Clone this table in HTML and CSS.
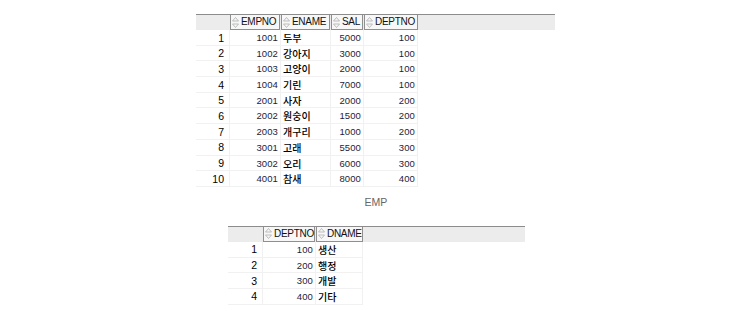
FILE: index.html
```html
<!DOCTYPE html>
<html lang="ko">
<head>
<meta charset="utf-8">
<link rel="stylesheet" href="styles.css">
</head>
<body>
<div class="page">
  <div class="grid emp">
    <div class="head">
      <div class="hc rn"></div>
      <div class="hc c-empno"><svg class="sort" viewBox="0 0 7 11"><path d="M3.5 0.5 L6.5 4 L0.5 4 Z M0.5 7 L6.5 7 L3.5 10.5 Z"/></svg><span class="lbl">EMPNO</span></div>
      <div class="hc c-ename"><svg class="sort" viewBox="0 0 7 11"><path d="M3.5 0.5 L6.5 4 L0.5 4 Z M0.5 7 L6.5 7 L3.5 10.5 Z"/></svg><span class="lbl">ENAME</span></div>
      <div class="hc c-sal"><svg class="sort" viewBox="0 0 7 11"><path d="M3.5 0.5 L6.5 4 L0.5 4 Z M0.5 7 L6.5 7 L3.5 10.5 Z"/></svg><span class="lbl">SAL</span></div>
      <div class="hc c-deptno"><svg class="sort" viewBox="0 0 7 11"><path d="M3.5 0.5 L6.5 4 L0.5 4 Z M0.5 7 L6.5 7 L3.5 10.5 Z"/></svg><span class="lbl">DEPTNO</span></div>
    </div>
    <div class="body">
      <div class="row"><span class="n">1</span><span class="num">1001</span><span class="ko">두부</span><span class="num">5000</span><span class="num">100</span></div>
      <div class="row"><span class="n">2</span><span class="num">1002</span><span class="ko">강아지</span><span class="num">3000</span><span class="num">100</span></div>
      <div class="row"><span class="n">3</span><span class="num">1003</span><span class="ko">고양이</span><span class="num">2000</span><span class="num">100</span></div>
      <div class="row"><span class="n">4</span><span class="num">1004</span><span class="ko">기린</span><span class="num">7000</span><span class="num">100</span></div>
      <div class="row"><span class="n">5</span><span class="num">2001</span><span class="ko">사자</span><span class="num">2000</span><span class="num">200</span></div>
      <div class="row"><span class="n">6</span><span class="num">2002</span><span class="ko">원숭이</span><span class="num">1500</span><span class="num">200</span></div>
      <div class="row"><span class="n">7</span><span class="num">2003</span><span class="ko">개구리</span><span class="num">1000</span><span class="num">200</span></div>
      <div class="row"><span class="n">8</span><span class="num">3001</span><span class="ko">고래</span><span class="num">5500</span><span class="num">300</span></div>
      <div class="row"><span class="n">9</span><span class="num">3002</span><span class="ko">오리</span><span class="num">6000</span><span class="num">300</span></div>
      <div class="row"><span class="n">10</span><span class="num">4001</span><span class="ko">참새</span><span class="num">8000</span><span class="num">400</span></div>
    </div>
  </div>

  <div class="caption">EMP</div>

  <div class="grid dept">
    <div class="head">
      <div class="hc rn"></div>
      <div class="hc c-dno"><svg class="sort" viewBox="0 0 7 11"><path d="M3.5 0.5 L6.5 4 L0.5 4 Z M0.5 7 L6.5 7 L3.5 10.5 Z"/></svg><span class="lbl">DEPTNO</span></div>
      <div class="hc c-dname"><svg class="sort" viewBox="0 0 7 11"><path d="M3.5 0.5 L6.5 4 L0.5 4 Z M0.5 7 L6.5 7 L3.5 10.5 Z"/></svg><span class="lbl">DNAME</span></div>
    </div>
    <div class="body">
      <div class="row"><span class="n">1</span><span class="num">100</span><span class="ko">생산</span></div>
      <div class="row"><span class="n">2</span><span class="num">200</span><span class="ko">행정</span></div>
      <div class="row"><span class="n">3</span><span class="num">300</span><span class="ko">개발</span></div>
      <div class="row"><span class="n">4</span><span class="num">400</span><span class="ko">기타</span></div>
    </div>
  </div>
</div>
</body>
</html>
```

FILE: styles.css
```css
html, body {
  margin: 0;
  padding: 0;
  background: #ffffff;
}

.page {
  width: 750px;
  height: 311px;
  overflow: hidden;
  font-family: "Liberation Sans", Arial, sans-serif;
  color: #000;
}

.grid {
  display: flex;
  flex-direction: column;
}

.emp {
  margin: 14px 0 0 196px;
}

.dept {
  margin: 0 0 0 228px;
}

.head {
  display: flex;
  height: 16px;
  background: #ececec;
  border-top: 1px solid #8c8c8c;
  box-sizing: border-box;
}

.emp .head { width: 359px; }
.dept .head { width: 297px; }

.hc {
  box-sizing: border-box;
  height: 15px;
  border: 1px solid #8f8f8f;
  border-top: 0;
  background: #f7f7f7;
  margin-right: 1px;
  display: flex;
  align-items: center;
  color: #111;
  padding-left: 1px;
  white-space: nowrap;
  flex: none;
}

.lbl {
  font-size: 10px;
  letter-spacing: -0.3px;
  line-height: 12px;
}

.hc.rn {
  border: 0;
  background: transparent;
  margin-right: 0;
}

.sort {
  width: 7px;
  height: 11px;
  margin-right: 2px;
  flex: none;
}

.sort path {
  fill: none;
  stroke: #b5b5b5;
  stroke-width: 0.9;
}

.emp .rn { width: 34px; }
.c-empno { width: 50px; }
.c-ename { width: 49px; }
.c-sal { width: 32px; }
.c-deptno { width: 54px; }

.dept .rn { width: 35px; }
.c-dno { width: 52px; }
.c-dname { width: 47px; }

.body {
  display: flex;
  flex-direction: column;
}

.row {
  display: grid;
  height: 15.7px;
  box-sizing: border-box;
  border-bottom: 1px solid #f1f1f1;
  align-items: center;
}

.emp .row {
  width: 222px;
  grid-template-columns: 34px 51px 50px 33px 54px;
}

.dept .row {
  width: 135px;
  grid-template-columns: 35px 53px 47px;
}

.row span {
  height: 100%;
  display: flex;
  align-items: center;
  box-sizing: border-box;
  border-right: 1px solid #f1f1f1;
  white-space: nowrap;
}

.n {
  justify-content: flex-end;
  padding-right: 5px;
  font-size: 10.5px;
  color: #000;
}

.num {
  justify-content: flex-end;
  padding-right: 2px;
  font-size: 9.5px;
  letter-spacing: 0.1px;
  color: #1c1c3c;
}

.ko {
  padding-left: 2px;
  font-family: "Noto Sans CJK KR", "Liberation Sans", sans-serif;
  font-size: 10px;
  font-weight: 500;
  color: #000;
}

.caption {
  text-align: center;
  font-size: 10.5px;
  color: #666;
  margin: 9px 0 0 2px;
  height: 30px;
  line-height: 12px;
}
```
